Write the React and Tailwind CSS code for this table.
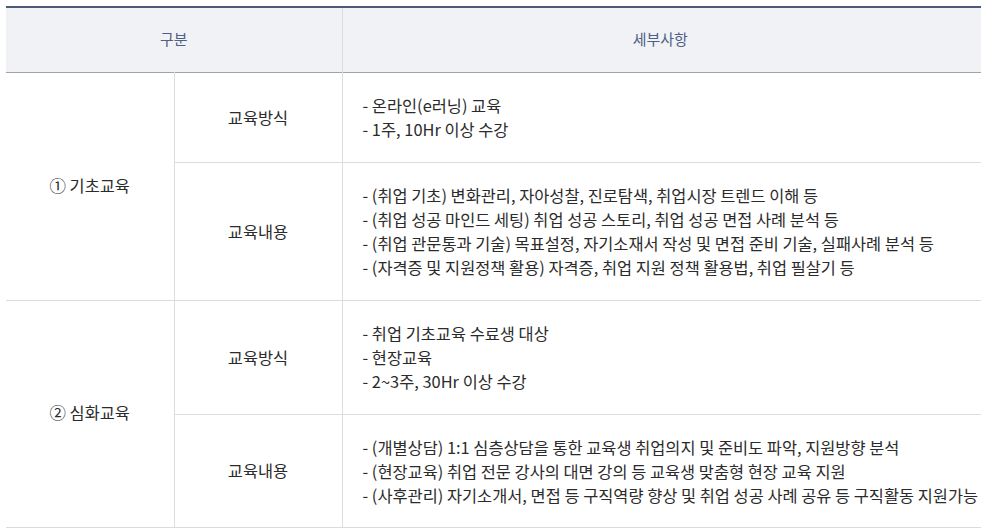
const rows = [
  {
    group: "① 기초교육",
    items: [
      { label: "교육방식", h: "h-[90px]", lines: ["- 온라인(e러닝) 교육", "- 1주, 10Hr 이상 수강"] },
      {
        label: "교육내용",
        h: "h-[138px]",
        lines: [
          "- (취업 기초) 변화관리, 자아성찰, 진로탐색, 취업시장 트렌드 이해 등",
          "- (취업 성공 마인드 세팅) 취업 성공 스토리, 취업 성공 면접 사례 분석 등",
          "- (취업 관문통과 기술) 목표설정, 자기소재서 작성 및 면접 준비 기술, 실패사례 분석 등",
          "- (자격증 및 지원정책 활용) 자격증, 취업 지원 정책 활용법, 취업 필살기 등",
        ],
      },
    ],
  },
  {
    group: "② 심화교육",
    items: [
      { label: "교육방식", h: "h-[114px]", lines: ["- 취업 기초교육 수료생 대상", "- 현장교육", "- 2~3주, 30Hr 이상 수강"] },
      {
        label: "교육내용",
        h: "h-[113px]",
        lines: [
          "- (개별상담) 1:1 심층상담을 통한 교육생 취업의지 및 준비도 파악, 지원방향 분석",
          "- (현장교육) 취업 전문 강사의 대면 강의 등 교육생 맞춤형 현장 교육 지원",
          "- (사후관리) 자기소개서, 면접 등 구직역량 향상 및 취업 성공 사례 공유 등 구직활동 지원가능",
        ],
      },
    ],
  },
];

export default function App() {
  return (
    <div className="w-[981px] h-[532px] overflow-hidden bg-white pt-[6px] pl-[6px]" style={{ fontFamily: '"Noto Sans CJK KR", "Noto Sans", sans-serif' }}>
      <table className="w-[990px] border-collapse table-fixed text-[16.4px] text-[#2b2b2b]">
        <colgroup>
          <col className="w-[168px]" />
          <col className="w-[168px]" />
          <col />
        </colgroup>
        <thead>
          <tr className="h-[65px] bg-[#f1f2f6] border-t-2 border-t-[#4f5a78] border-b border-b-[#a3a3a3] text-[15px]">
            <th colSpan={2} className="font-normal text-[#4f5f85] text-center border-r border-r-[#dcdcdc] pb-[2px]">구분</th>
            <th className="font-normal text-[#4f5f85] text-center pr-[18px] pb-[2px]">세부사항</th>
          </tr>
        </thead>
        <tbody>
          {rows.map((g) =>
            g.items.map((it, i) => (
              <tr key={g.group + i} className={`${it.h} border-b border-b-[#dcdcdc]`}>
                {i === 0 && (
                  <td rowSpan={g.items.length} className="text-center align-middle border-r border-r-[#dcdcdc] pb-[2px]">
                    {g.group}
                  </td>
                )}
                <td className="text-center align-middle border-r border-r-[#dcdcdc]">{it.label}</td>
                <td className="pl-[20px] align-middle leading-[24px] whitespace-nowrap">
                  {it.lines.map((l) => (
                    <div key={l}>{l}</div>
                  ))}
                </td>
              </tr>
            ))
          )}
        </tbody>
      </table>
    </div>
  );
}
